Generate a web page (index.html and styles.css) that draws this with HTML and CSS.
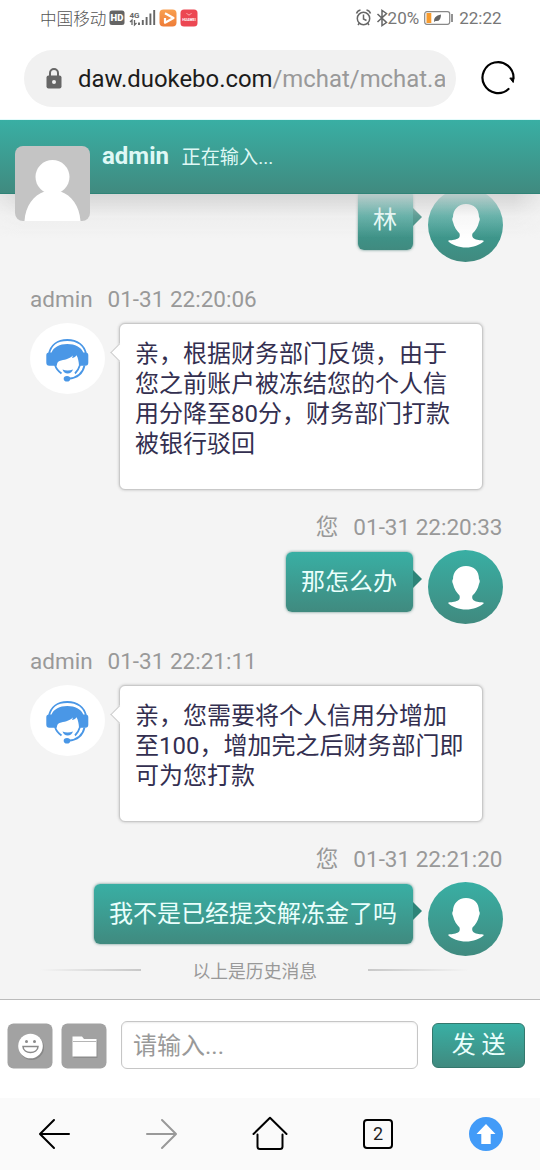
FILE: index.html
```html
<!DOCTYPE html>
<html lang="zh-CN">
<head>
<meta charset="utf-8">
<title>mchat</title>
<link rel="stylesheet" href="styles.css">
</head>
<body>
<svg class="defs" width="0" height="0">
  <defs>
    <linearGradient id="orange" x1="0" y1="0" x2="0" y2="1"><stop offset="0" stop-color="#f9a050"/><stop offset="1" stop-color="#ee7c38"/></linearGradient>
    <symbol id="person" viewBox="0 0 75 74">
      <path fill="#fff" d="M38 16c-8 0-13 6-13 13-1 1-1 3 0 5 1 5 4 9 6.500 11.500 1 4-1 5-4 6-4 1-7 .5-7.500 1.500 4 4 11 6.500 18 6.500s14-2.500 18-6.500c-1-1-4.500-.5-8-1.500-3-1-4.500-3-3.500-6 3-3 5.500-6.500 6.500-11.500 1-2 1-4 0-5 0-8-5-13-13-13z"/>
    </symbol>
    <symbol id="agent" viewBox="0 0 75 71">
      <path fill="none" stroke="#4a97e6" stroke-width="1.800" d="M19 31C20.500 22 27.500 17 37.300 17S54.500 22 56 31"/>
      <path fill="#4a97e6" d="M21.500 29.500C24 24 29.500 21 37.300 21s13.700 3 16 8.500h2.200q2.800 0 2.800 2.800v7.200q0 3.200-3 3.200H49c-.2-4-.8-7.500-2.500-10.500-1.300 1.800-2.800 2.500-4.500 2.800l1-2.500c-4 4-9 4-13.500 5.500-2 .8-2.500 2.500-2.700 4.700h-7.500q-3 0-3-3.200v-7.200q0-2.800 2.800-2.800z"/>
      <path fill="none" stroke="#4a97e6" stroke-width="1.800" d="M25 42q1.500 5 6.500 8.500M54.500 42.500c-1.800 8-7.500 12.500-16 13.200M50 42q-1.500 5-5 8.500"/>
      <path fill="#4a97e6" d="M32.500 46.500q5 2 10.500 0-1.500 4-5.300 4t-5.200-4z"/>
      <ellipse cx="37" cy="55.700" rx="3.300" ry="2.800" fill="#4a97e6"/>
    </symbol>
  </defs>
</svg>
<div class="screen">
  <div class="status">
    <span class="carrier">中国移动</span>
    <svg class="status-left" width="92" height="20" viewBox="0 0 92 20">
      <rect x="1.500" y="2.500" width="15" height="14.500" rx="2.500" fill="#646464"/>
      <text x="9" y="13.300" text-anchor="middle" class="hd">HD</text>
      <text x="21.500" y="9.500" class="net">4G</text>
      <path d="M24 17v-5l-2 2M26.500 12v5l2-2" fill="none" stroke="#666" stroke-width="1.300"/>
      <path d="M31 17v-2.500M34.800 17v-5M38.600 17v-8M42.400 17v-11.500M46.200 17v-15" stroke="#666" stroke-width="1.900" fill="none"/>
      <rect x="51.500" y="1.500" width="17" height="17" rx="4" fill="url(#orange)"/>
      <path d="M57 5.300l8.500 4.700-8.500 4.700V10" fill="none" stroke="#fff" stroke-width="2.200" stroke-linejoin="round"/>
      <rect x="72.500" y="1.500" width="17" height="17" rx="3.500" fill="#ec4752"/>
      <path d="M78.500 5q2.500 4 5 0" fill="none" stroke="#ffc0c0" stroke-width=".8"/>
      <text x="81" y="12.500" text-anchor="middle" class="brand">HUAWEI</text>
    </svg>
    <div class="status-right">
      <svg width="34" height="20" viewBox="0 0 34 20" fill="none" stroke="#666" stroke-width="1.500">
        <circle cx="9.500" cy="10.500" r="6.200"/><path d="M9.500 6.500v4.500l3 1.500M2.500 5.500q1-3 4-3.500M12.500 2q3 .5 4 3.500M5.500 15l-1.500 2M13.500 15l1.500 2"/>
        <path d="M23.500 6l9 8.500-4.500 3v-15l4.500 3-9 8.500"/>
      </svg><span class="pct">20%</span>
      <svg class="battery" width="30" height="16" viewBox="0 0 30 16">
        <rect x=".7" y="1.700" width="25" height="12.600" rx="2.200" fill="none" stroke="#888" stroke-width="1.200"/>
        <rect x="2.500" y="3" width="4.800" height="10" fill="#f79b2e"/>
        <path d="M10 12q-1-6 7-7.500 0 7.500-5.500 6.500z" fill="#666"/><path d="M28 4v8" stroke="#777" stroke-width="1.600"/>
      </svg><span class="clock">22:22</span>
    </div>
  </div>
  <div class="browser">
    <div class="address">
      <svg width="16" height="21" viewBox="0 0 16 21"><rect x=".5" y="7.500" width="15" height="13" rx="2" fill="#666"/><path d="M4 8V5a4 4 0 0 1 8 0v3" fill="none" stroke="#666" stroke-width="2"/><circle cx="8" cy="14" r="2" fill="#f1f1f1"/></svg>
      <div class="url">daw.duokebo.com<span>/mchat/mchat.a</span></div>
    </div>
    <svg class="reload" width="36" height="36" viewBox="0 0 36 36"><path d="M28.500 29A15.500 15.500 0 1 1 33.500 18" fill="none" stroke="#000" stroke-width="2.200" stroke-linecap="round"/><path d="M29.800 18l4.200.2-.8 4.300z" fill="#000" stroke="#000"/></svg>
  </div>
  <header class="head">
    <svg class="head-avatar" width="75" height="75" viewBox="0 0 75 75"><rect width="75" height="75" rx="8" fill="#c4c4c4"/><circle cx="37.500" cy="31" r="17" fill="#fff"/><path d="M9.500 75c1-15 9-26 20-29.500l1-1.500h14l1 1.500c11 3.500 19 14.500 20 29.500z" fill="#fff"/></svg>
    <strong>admin</strong><span>正在输入...</span>
  </header>
  <main class="chat">
    <section class="msg me">
      <div class="body"><div class="bubble">林</div><svg class="avatar"><use href="#person"/></svg></div>
    </section>
    <section class="msg admin">
      <div class="meta"><span>admin</span><span>01-31 22:20:06</span></div>
      <div class="body"><svg class="avatar"><use href="#agent"/></svg><div class="bubble">亲，根据财务部门反馈，由于<br>您之前账户被冻结您的个人信<br>用分降至80分，财务部门打款<br>被银行驳回</div></div>
    </section>
    <section class="msg me">
      <div class="meta"><span>您</span><span>01-31 22:20:33</span></div>
      <div class="body"><div class="bubble">那怎么办</div><svg class="avatar"><use href="#person"/></svg></div>
    </section>
    <section class="msg admin">
      <div class="meta"><span>admin</span><span>01-31 22:21:11</span></div>
      <div class="body"><svg class="avatar"><use href="#agent"/></svg><div class="bubble">亲，您需要将个人信用分增加<br>至100，增加完之后财务部门即<br>可为您打款</div></div>
    </section>
    <section class="msg me">
      <div class="meta"><span>您</span><span>01-31 22:21:20</span></div>
      <div class="body"><div class="bubble">我不是已经提交解冻金了吗</div><svg class="avatar"><use href="#person"/></svg></div>
    </section>
    <div class="history"><i></i><span>以上是历史消息</span><i></i></div>
  </main>
  <div class="composer">
    <svg class="tool" width="46" height="46" viewBox="0 0 46 46"><rect x=".5" y=".5" width="45" height="45" rx="6" fill="#a2a2a2"/><circle cx="24.500" cy="24.500" r="12.500" fill="#777" opacity=".6"/><circle cx="23.500" cy="23" r="12.300" fill="#fff"/><circle cx="19.500" cy="18.500" r="1.500" fill="#8a8a8a"/><circle cx="27.500" cy="18.500" r="1.500" fill="#8a8a8a"/><path d="M16 23.500h15c0 8-15 8-15 0z" fill="#fff" stroke="#8a8a8a" stroke-width="1.500"/></svg>
    <svg class="tool" width="46" height="46" viewBox="0 0 46 46"><rect x=".5" y=".5" width="45" height="45" rx="6" fill="#a2a2a2"/><path d="M12.500 15h9l2 2.500h13V35h-24z" fill="#8d8d8d"/><path d="M11.500 13.500h9.500l2 2.500h12.500v17.500h-24z" fill="#fff"/><path d="M12 18.500h23" stroke="#b5b5b5"/></svg>
    <div class="field">请输入...</div>
    <div class="send">发 送</div>
  </div>
  <nav class="nav">
    <svg viewBox="0 0 36 36"><path d="M33 18H4.500M18 4L4 18l14 14" stroke="#000"/></svg>
    <svg viewBox="0 0 36 36"><path d="M3 18h28.500M18 4l14 14-14 14" stroke="#999"/></svg>
    <svg viewBox="0 0 36 36"><path d="M1.500 18L18 1.800 34.500 18M5.500 18.500v12q0 2.500 2.500 2.500h20q2.500 0 2.500-2.500v-12" stroke="#000"/></svg>
    <div class="tabs">2</div>
    <svg viewBox="0 0 36 36"><circle cx="18" cy="18" r="17" fill="#429bf8"/><path d="M18 8l9.500 10H22.700v10h-9.400V18H8.500z" fill="#fff"/></svg>
  </nav>
</div>
</body>
</html>
```
FILE: styles.css
```css
* { box-sizing: border-box; }
body { margin: 0; font-family: Roboto, "Noto Sans CJK SC", sans-serif; background: #fff; }
.defs { position: absolute; }
svg { display: block; flex: none; }
.screen { width: 540px; height: 1170px; display: flex; flex-direction: column; overflow: hidden; }
.screen > * { flex: none; }

.status { height: 36px; padding: 0 38.500px 0 40px; display: flex; align-items: center; font-size: 16.6px; font-weight: 300; color: #555; white-space: nowrap; }
.status-left { margin-left: 2px; }
.status-right { margin-left: auto; display: flex; align-items: center; }
.pct, .clock { font-size: 17px; font-weight: 400; color: #777; }
.battery { margin: 0 5px 0 5px; }
.hd { font: 900 9.500px Roboto, sans-serif; fill: #fff; }
.net { font: 700 8px Roboto, sans-serif; fill: #666; }
.brand { font: 700 3.600px Roboto, sans-serif; fill: #fff; }

.browser { height: 84px; padding: 14px 24px 0; display: flex; align-items: flex-start; border-bottom: 1px solid #e3fbfb; }
.address { width: 432px; height: 57px; padding: 0 11px 0 22px; border-radius: 29px; background: #f1f1f1; display: flex; align-items: center; gap: 16px; }
.url { flex: 1; overflow: hidden; white-space: nowrap; font-size: 23.900px; color: #1c1c1c; }
.url span { color: #999; }
.reload { margin: 10px 0 0 24px; }

.head { height: 74px; padding: 0 15px; display: flex; position: relative; z-index: 2; background: linear-gradient(#39afa4, #408a7f); border-bottom: 1px solid #2f8377; color: #dff8f5; line-height: 72px; }
.head-avatar { margin-top: 26px; }
.head strong { margin-left: 12px; width: 67px; font-size: 24px; }
.head span { margin-left: 12.500px; font-size: 19.200px; line-height: 75px; }

.chat { height: 805px; background: #f4f4f4; overflow: hidden; position: relative; padding-right: 37.500px; padding-left: 30px; }
.chat::before { content: ""; position: absolute; z-index: 1; left: 0; right: 0; top: 0; height: 44px; background: linear-gradient(rgba(208,208,208,.85), rgba(225,225,225,.28) 50%, rgba(244,244,244,0)); -webkit-mask-image: linear-gradient(90deg, rgba(0,0,0,.45), #000 24px, #000 514px, rgba(0,0,0,.35)); }
.msg { margin-bottom: 16px; }
.msg:first-child { margin-top: -6px; }
.meta { height: 44px; display: flex; gap: 15px; line-height: 43px; font-size: 22.500px; color: #999; }
.me .meta { justify-content: flex-end; }
.body { display: flex; align-items: flex-start; }
.me .body { justify-content: flex-end; height: 74px; }
.bubble { position: relative; border-radius: 6px; font-size: 24px; line-height: 30px; white-space: nowrap; }
.me .bubble { margin: 1.500px 15px 0 0; height: 60px; padding: 0 15.500px; line-height: 60px; color: #eafffc; background: linear-gradient(#39afa4, #408a7f); box-shadow: 0 0 3px rgba(30,100,90,.7); }
.me .bubble::after { content: ""; position: absolute; left: 100%; top: 18px; border: 9px solid transparent; border-left-color: #2d8478; border-right: 0; }
.me .avatar { width: 75px; height: 74px; border-radius: 50%; background: linear-gradient(#39afa4, #408a7f); }
.admin .avatar { margin-top: .5px; width: 75px; height: 71px; border-radius: 50%; background: #fff; }
.admin .bubble { margin: .5px 0 0 13.500px; width: 364px; padding: 15px 15.500px 30.500px; color: #332f50; background: #fff; border: 1px solid #c9c9c9; box-shadow: 0 0 3px #bbb; }
.admin .bubble::before { content: ""; position: absolute; left: -7px; top: 22px; width: 12px; height: 12px; background: #fff; border: solid #ccc; border-width: 0 0 1px 1px; transform: rotate(45deg); }
.history { display: flex; align-items: center; justify-content: space-between; height: 28px; margin: -16px 33px 0 10px; font-size: 17.800px; color: #999; }
.history i { width: 101px; height: 2px; background: linear-gradient(90deg, transparent, #c8c8c8); }
.history i:last-child { transform: scaleX(-1); }

.composer { height: 99px; padding: 22.500px 15px 0 7px; border-top: 1px solid #bbb; background: #fff; display: flex; align-items: flex-start; }
.tool + .tool { margin-left: 8px; }
.field { margin: -1.500px 14px 0 14px; width: 298px; height: 48px; border: 1.500px solid #c6c6c6; border-radius: 6px; padding-left: 11px; font-size: 24px; line-height: 48px; color: #999; box-shadow: inset 0 1px 2px #eee; }
.send { width: 93px; height: 45px; border: 1px solid #34786d; border-radius: 6px; background: linear-gradient(#39afa4, #408a7f); color: #eafffc; font-size: 24px; line-height: 43px; text-align: center; }

.nav { height: 72px; background: #fafafa; display: grid; grid-template-columns: repeat(5, 1fr); place-items: center; }
.nav svg { width: 36px; height: 36px; fill: none; stroke-width: 2; stroke-linecap: round; stroke-linejoin: round; }
.tabs { width: 30px; height: 30px; border: 2px solid #000; border-radius: 4px; text-align: center; line-height: 26px; font-size: 18px; color: #222; }
```
